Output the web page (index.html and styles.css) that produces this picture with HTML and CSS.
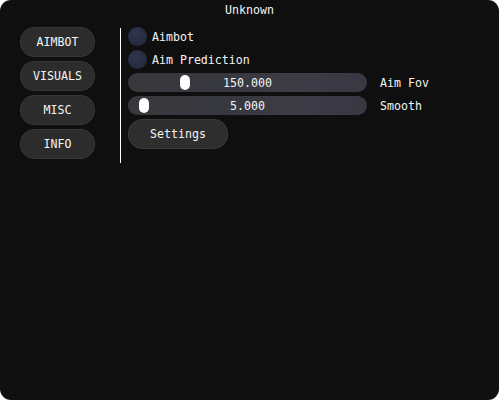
FILE: index.html
```html
<!DOCTYPE html>
<html lang="en">
<head>
    <meta charset="UTF-8">
    <meta name="viewport" content="width=device-width, initial-scale=1.0">
    <title>Unknown</title>
    <link rel="stylesheet" href="styles.css">
</head>
<body>
    <div class="window">
        <div class="title">Unknown</div>
        <div class="main">
            <div class="tabs">
                <button class="tab">AIMBOT</button>
                <button class="tab">VISUALS</button>
                <button class="tab">MISC</button>
                <button class="tab">INFO</button>
            </div>
            <div class="divider"></div>
            <div class="panel">
                <div class="check-row">
                    <span class="check"></span>
                    <span>Aimbot</span>
                </div>
                <div class="check-row">
                    <span class="check"></span>
                    <span>Aim Prediction</span>
                </div>
                <div class="slider-row">
                    <div class="slider">
                        <span class="knob" style="left: 52px;"></span>
                        <span class="value">150.000</span>
                    </div>
                    <span>Aim Fov</span>
                </div>
                <div class="slider-row">
                    <div class="slider">
                        <span class="knob" style="left: 11px;"></span>
                        <span class="value">5.000</span>
                    </div>
                    <span>Smooth</span>
                </div>
                <button class="settings">Settings</button>
            </div>
        </div>
    </div>
</body>
</html>
```

FILE: styles.css
```css
body {
    margin: 0;
    padding: 0;
    background-color: #ffffff;
    font-family: "DejaVu Sans Mono", "Liberation Mono", monospace;
    font-size: 11.6px;
    color: #f4f4f4;
}
.window {
    width: 499px;
    height: 400px;
    background-color: #0f0f0f;
    border-radius: 11px;
    overflow: hidden;
}
.title {
    height: 21px;
    line-height: 21px;
    text-align: center;
}
.main {
    display: flex;
    padding: 6px 0 0 20px;
}
.tabs {
    display: flex;
    flex-direction: column;
    gap: 4px;
    width: 75px;
}
.tab {
    height: 30px;
    padding: 0;
    background-color: #2c2c2c;
    border: 1px solid #363636;
    border-radius: 14px;
    color: inherit;
    font-family: inherit;
    font-size: inherit;
}
.divider {
    width: 1px;
    height: 135px;
    margin: 1px 7px 0 25px;
    background-color: #ffffff;
}
.panel {
    display: flex;
    flex-direction: column;
    align-items: flex-start;
    gap: 4px;
}
.check-row, .slider-row {
    display: flex;
    align-items: center;
    height: 19px;
}
.check {
    width: 19px;
    height: 19px;
    margin-right: 5px;
    border-radius: 50%;
    background: radial-gradient(circle at 40% 35%, #2f3550, #262a3c 70%);
}
.slider {
    position: relative;
    width: 239px;
    height: 19px;
    margin-right: 13px;
    border-radius: 10px;
    background: linear-gradient(100deg, #38383c 0%, #37383f 45%, #3d3c46 70%, #383842 100%);
    display: flex;
    align-items: center;
    justify-content: center;
}
.knob {
    position: absolute;
    top: 2px;
    width: 10px;
    height: 15px;
    border-radius: 5px;
    background-color: #ffffff;
}
.value {
    position: relative;
}
.settings {
    width: 100px;
    height: 30px;
    padding: 0;
    background-color: #2e2e2e;
    border: 1px solid #3a3a3a;
    border-radius: 14px;
    color: inherit;
    font-family: inherit;
    font-size: inherit;
}
```
